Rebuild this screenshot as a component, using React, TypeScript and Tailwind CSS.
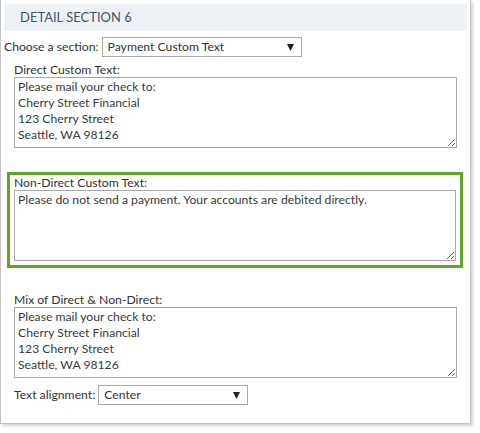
import { type ReactNode } from "react";

const font = { fontFamily: 'Lato, "Noto Sans", sans-serif' };

const address = "Please mail your check to:\nCherry Street Financial\n123 Cherry Street\nSeattle, WA 98126";

function FakeSelect({ value, width }: { value: string; width: string }) {
    return (
        <div className={`${width} flex h-[20px] items-center justify-between border border-[#a9a9a9] bg-white pl-[5px] pr-[7px]`}>
            <span className="leading-none">{value}</span>
            <svg width="7" height="7" viewBox="0 0 7 7">
                <path d="M0 0h7L3.5 7z" fill="#222" />
            </svg>
        </div>
    );
}

function Field({ label, value, className }: { label: string; value: string; className?: string }) {
    return (
        <div className={className}>
            <div className="h-[15px] leading-[15px]">{label}</div>
            <textarea
                readOnly
                defaultValue={value}
                className="block h-[71px] w-[443px] resize border border-[#a9a9a9] bg-white px-[3px] pt-[1px] leading-[16px] text-[#3a3a3a] outline-none"
            />
        </div>
    );
}

function Row({ children }: { children: ReactNode }) {
    return <div className="flex items-center gap-[3px]">{children}</div>;
}

export default function App() {
    return (
        <div className="h-[433px] w-[480px] bg-white text-[12.2px] text-[#333]" style={font}>
            <div className="h-[424px] w-[471px] border-x border-b border-[#c4c4c4] px-[3px] pt-[4px] shadow-[2px_2px_3px_rgba(0,0,0,0.18)]">
                <div className="flex h-[27px] w-[463px] items-center bg-[#eef2f6] pl-[16px] text-[13px] text-[#4a5263]">
                    DETAIL SECTION 6
                </div>
                <div className="mt-[6px]">
                    <Row>
                        <span>Choose a section:</span>
                        <FakeSelect value="Payment Custom Text" width="w-[200px]" />
                    </Row>
                </div>
                <Field label="Direct Custom Text:" value={address} className="ml-[10px] mt-[5px]" />
                <div className="ml-[3px] mt-[24px] w-[456px] border-[3px] border-[#62a32b] pb-[4px] pl-[4px] pt-[0px]">
                    <div className="h-[15px] leading-[15px]">Non-Direct Custom Text:</div>
                    <textarea
                        readOnly
                        defaultValue="Please do not send a payment. Your accounts are debited directly."
                        className="block h-[71px] w-[442px] resize border border-[#a9a9a9] bg-white px-[3px] pt-[1px] leading-[16px] text-[#3a3a3a] outline-none"
                    />
                </div>
                <Field label="Mix of Direct & Non-Direct:" value={address} className="ml-[10px] mt-[24px]" />
                <div className="ml-[10px] mt-[7px]">
                    <Row>
                        <span>Text alignment:</span>
                        <FakeSelect value="Center" width="w-[150px]" />
                    </Row>
                </div>
            </div>
        </div>
    );
}
